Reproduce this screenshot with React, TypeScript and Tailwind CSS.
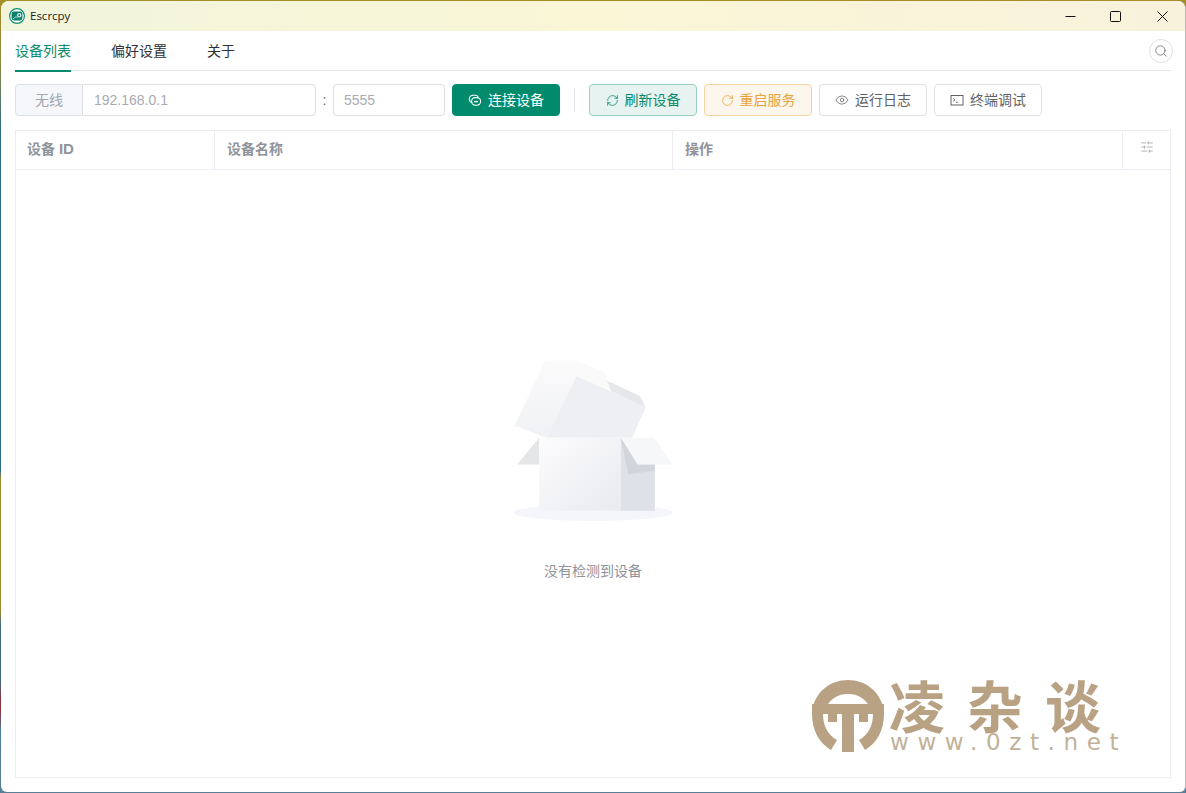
import { Search, SlidersHorizontal, RefreshCw, RotateCw, Eye } from "lucide-react";

const FONT = "font-['Liberation_Sans','Noto_Sans_CJK_SC',sans-serif]";

function AppLogo() {
  return (
    <svg width="16" height="16" viewBox="0 0 16 16">
      <circle cx="8" cy="8" r="7.4" fill="#fff" stroke="#0b8f72" strokeWidth="1.2" />
      <rect x="2.6" y="3.4" width="10.8" height="9" rx="2.4" fill="#0b7f6a" />
      <circle cx="10.2" cy="7.2" r="2.2" fill="#d9efe8" />
      <circle cx="10.2" cy="7.2" r="1" fill="#0b7f6a" />
      <path d="M4 11l3-2.4 1.6 1.4" stroke="#bfe5da" strokeWidth="0.9" fill="none" />
    </svg>
  );
}

function LinkIcon() {
  return (
    <svg width="14" height="14" viewBox="0 0 14 14" fill="none" stroke="currentColor" strokeWidth="1.1">
      <path d="M4.2 9.6A3.7 3.7 0 0 1 5 2.3h2.2a3.7 3.7 0 0 1 3 1.6" />
      <rect x="3.6" y="4.6" width="9" height="7.6" rx="3.6" />
      <path d="M6 8.6h4" />
    </svg>
  );
}

function TerminalIcon() {
  return (
    <svg width="14" height="14" viewBox="0 0 14 14" fill="none" stroke="currentColor" strokeWidth="1">
      <rect x="1" y="2.5" width="12" height="9.5" />
      <path d="M3.2 5.4l1.8 1.4-1.8 1.4M5.8 9.2h2.4" strokeWidth="0.9" />
    </svg>
  );
}

function Box() {
  return (
    <svg width="160" height="161" viewBox="54 30 480 484" className="block">
      <defs>
        <linearGradient id="flap" x1="0" y1="0" x2="0" y2="1">
          <stop offset="0" stopColor="#fbfbfc" />
          <stop offset="1" stopColor="#f0f1f4" />
        </linearGradient>
        <linearGradient id="front" x1="0" y1="0" x2="1" y2="1">
          <stop offset="0" stopColor="#fcfcfd" />
          <stop offset="1" stopColor="#e9eaef" />
        </linearGradient>
      </defs>
      <ellipse cx="294" cy="489" rx="240" ry="25" fill="#f5f6fb" />
      <polygon points="150,32 245,30 335,72 245,78 155,264 58,228" fill="url(#flap)" />
      <polygon points="245,78 350,125 452,172 412,264 155,264" fill="#eeeff2" />
      <polygon points="245,78 335,72 335,92 350,125" fill="#fafafb" />
      <polygon points="335,92 435,138 452,172 350,125" fill="#e6e7ea" />
      <polygon points="132,264 132,344 66,344" fill="#e5e6e8" />
      <rect x="132" y="264" width="246" height="219" fill="url(#front)" />
      <polygon points="378,264 480,344 480,483 378,483" fill="#dfe1e9" />
      <polygon points="378,264 428,344 480,344 480,362 400,374" fill="#d3d5dd" />
      <polygon points="378,264 478,264 532,344 428,344" fill="#f6f7f9" />
    </svg>
  );
}

function WatermarkLogo() {
  return (
    <svg width="74" height="74" viewBox="0 0 74 74" fill="#b9a184">
      <path d="M1 32C4 13 19 1 37 1s33 12 36 31H60C57 21 48 15 37 15S17 21 14 32z" />
      <rect x="1" y="25" width="72" height="10" />
      <path d="M1 35h11c0 12 5 21 14 26l-6 10C8 64 1 51 1 35z" />
      <path d="M73 35H62c0 12-5 21-14 26l6 10c12-7 19-20 19-36z" />
      <rect x="31" y="35" width="12" height="38" />
      <path d="M17 35h9v8h-9zM48 35h9v8h-9z" />
    </svg>
  );
}

function ToolButton({ className, icon, label }: { className: string; icon: React.ReactNode; label: string }) {
  return (
    <button className={`w-[108px] h-8 rounded border flex items-center justify-center gap-[6px] text-sm ${className}`}>
      {icon}
      <span>{label}</span>
    </button>
  );
}

export default function App() {
  return (
    <div className={`relative w-[1186px] h-[793px] overflow-hidden pl-px pt-px bg-[linear-gradient(to_bottom,#a58d28_0,#a58d28_1px,#8f8a3c_60px,#2f6c86_130px,#2f6c86_470px,#a08a2c_480px,#a08a2c_610px,#3f6a80_625px,#3f6a80_680px,#8f3440_700px,#8f3440_712px,#4a7d9a_730px,#5a7f96_793px)] ${FONT}`}>
      <div className="w-[1185px] h-[791px] rounded-t-lg rounded-b-md overflow-hidden bg-white flex flex-col border-r border-[#b9b9b9]">
        <div className="h-[30px] shrink-0 flex items-center bg-gradient-to-r from-[#f1f5dc] via-[#faf6d6] to-[#f8f2dc]">
          <div className="ml-2 flex items-center gap-[5px]">
            <AppLogo />
            <span className="pb-px text-[11.5px] text-[#1c1c1c] font-['Open_Sans','Liberation_Sans',sans-serif]">Escrcpy</span>
          </div>
          <div className="ml-auto flex items-center text-[#111]">
            <div className="w-[46px] flex justify-center">
              <svg width="11" height="11" viewBox="0 0 11 11"><path d="M0.5 5.5h10" stroke="currentColor" /></svg>
            </div>
            <div className="w-[46px] flex justify-center pr-px">
              <svg width="11" height="11" viewBox="0 0 11 11"><rect x="0.5" y="0.5" width="10" height="10" rx="1" fill="none" stroke="currentColor" /></svg>
            </div>
            <div className="w-[46px] flex justify-center">
              <svg width="11" height="11" viewBox="0 0 11 11"><path d="M0.5 0.5l10 10M10.5 0.5l-10 10" stroke="currentColor" /></svg>
            </div>
          </div>
        </div>

        <div className="flex-1 flex flex-col pl-[14px] pr-[14px] pb-[14px]">
          <div className="relative h-10 shrink-0 flex items-center gap-10 border-b border-[#e4e5ec] text-sm text-[#303133]">
            <div className="relative h-10 flex items-center text-[#0a8a6c]">
              设备列表
              <div className="absolute left-0 right-0 bottom-[-1px] h-[2px] bg-[#0a8a6c]" />
            </div>
            <div>偏好设置</div>
            <div>关于</div>
            <div className="absolute right-[-2px] top-2 w-6 h-6 rounded-full border border-[#dcdfe6] flex items-center justify-center text-[#4a4d52]">
              <Search size={14} strokeWidth={1.1} />
            </div>
          </div>

          <div className="mt-[13px] flex items-center h-8 shrink-0">
            <div className="w-[68px] h-8 flex items-center justify-center rounded-l border border-[#dcdfe6] bg-[#f5f7fa] text-sm text-[#a3a6ad]">无线</div>
            <div className="w-[233px] h-8 flex items-center pl-[11px] border-y border-r rounded-r border-[#dcdfe6] text-sm text-[#a8abb2]">192.168.0.1</div>
            <div className="w-[17px] text-center text-sm text-[#606266]">:</div>
            <div className="w-[112px] h-8 flex items-center pl-[10px] rounded border border-[#dcdfe6] text-sm text-[#a8abb2]">5555</div>
            <ToolButton className="ml-[7px] bg-[#028a6c] border-[#028a6c] text-white" icon={<LinkIcon />} label="连接设备" />
            <div className="mx-[14px] w-px h-6 bg-[#e4e5ec]" />
            <div className="flex gap-[7px]">
              <ToolButton className="bg-[#e6f3f0] border-[#9ad0c3] text-[#0a8a6c]" icon={<RefreshCw size={13} strokeWidth={1.4} />} label="刷新设备" />
              <ToolButton className="bg-[#fdf6ec] border-[#f6d5a4] text-[#e6a23c]" icon={<RotateCw size={13} strokeWidth={1.4} />} label="重启服务" />
              <ToolButton className="bg-white border-[#dcdfe6] text-[#606266]" icon={<Eye size={14} strokeWidth={1.3} />} label="运行日志" />
              <ToolButton className="bg-white border-[#dcdfe6] text-[#606266]" icon={<TerminalIcon />} label="终端调试" />
            </div>
          </div>

          <div className="mt-[14px] flex-1 flex flex-col border border-[#ebedf3]">
            <div className="h-[39px] shrink-0 flex border-b border-[#ebedf3] text-sm font-bold text-[#909399]">
              <div className="w-[199px] flex items-center pl-[11px] pb-[2px] border-r border-[#ebedf3]">
                <span>设备 <span className="text-[15px]">ID</span></span>
              </div>
              <div className="w-[458px] flex items-center pl-3 pb-[2px] border-r border-[#ebedf3]">设备名称</div>
              <div className="w-[450px] flex items-center pl-3 pb-[2px] border-r border-[#ebedf3]">操作</div>
              <div className="flex-1 flex justify-center pt-[9px] text-[#909399]">
                <SlidersHorizontal size={14} strokeWidth={1.2} />
              </div>
            </div>
            <div className="flex-1 flex flex-col items-center pt-[190px]">
              <Box />
              <div className="mt-[40px] text-sm leading-5 text-[#8f939b]">没有检测到设备</div>
            </div>
          </div>
        </div>
      </div>

      <div className="absolute left-[811px] top-[679px] pointer-events-none">
        <WatermarkLogo />
      </div>
      <div className="absolute left-[889px] top-[676px] flex gap-[22px] text-[56px] leading-[56px] font-bold text-[#b9a184] font-['Noto_Sans_CJK_SC',sans-serif] pointer-events-none">
        <span>凌</span>
        <span>杂</span>
        <span>谈</span>
      </div>
      <div className="absolute left-[890px] top-[732px] text-[23px] leading-5 tracking-[8.6px] text-[#c2b199] font-['DejaVu_Sans',sans-serif] pointer-events-none">
        www.0zt.net
      </div>
    </div>
  );
}
